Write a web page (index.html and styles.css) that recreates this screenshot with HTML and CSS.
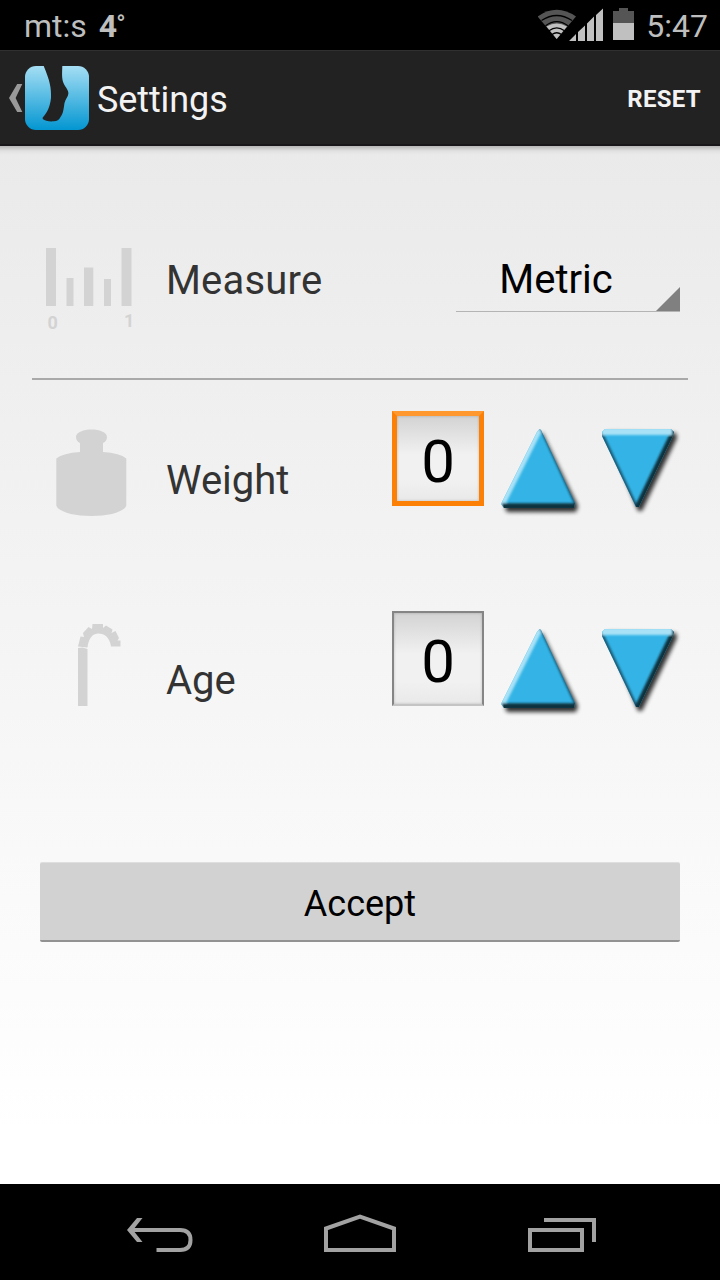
FILE: index.html
```html
<!DOCTYPE html>
<html lang="en">
<head>
<meta charset="utf-8">
<title>Settings</title>
<link rel="stylesheet" href="styles.css">
</head>
<body>
<svg class="defs" width="0" height="0" aria-hidden="true">
  <defs>
    <filter id="soft" x="-20%" y="-20%" width="140%" height="140%"><feGaussianBlur stdDeviation="2.2"/></filter>
    <filter id="edge" x="-10" y="-10" width="110" height="110" filterUnits="userSpaceOnUse"><feGaussianBlur stdDeviation="0.8"/></filter>
    <linearGradient id="sky" x1="0" y1="0" x2="0" y2="1"><stop offset="0" stop-color="#a5def4"/><stop offset="1" stop-color="#0396d1"/></linearGradient>
    <clipPath id="upClip"><path d="M39.500 4 41 5 75 78 74 83 4 83 1 79 37 7Z"/></clipPath>
    <clipPath id="downClip"><path d="M5 4 71 4 74 7 73 11 39 82 36 82 2 11 2 7Z"/></clipPath>
    <symbol id="up" viewBox="0 0 90 100">
      <path d="M42 7 78 81 76 87 7 87 5 83Z" fill="#000" opacity=".8" filter="url(#soft)"/>
      <g clip-path="url(#upClip)">
        <path d="M0 0H90V100H0Z" fill="#34b4e6"/>
        <g filter="url(#edge)">
          <path d="M39 3-1 83" stroke="#a9e2f7" stroke-width="8"/>
          <path d="M41 2 78 83" stroke="#1b5a74" stroke-width="4"/>
          <path d="M2 81.500H78" stroke="#0e303e" stroke-width="6.500"/>
        </g>
      </g>
    </symbol>
    <symbol id="down" viewBox="0 0 90 100">
      <path d="M7 7 76 8 77 13 42 86 38 86Z" fill="#000" opacity=".8" filter="url(#soft)"/>
      <g clip-path="url(#downClip)">
        <path d="M0 0H90V100H0Z" fill="#34b4e6"/>
        <g filter="url(#edge)">
          <path d="M1 8 37 84" stroke="#1b5a74" stroke-width="4"/>
          <path d="M76 5 38 84" stroke="#0e303e" stroke-width="8"/>
          <path d="M2 6.500H72" stroke="#a9e2f7" stroke-width="7"/>
        </g>
      </g>
    </symbol>
  </defs>
</svg>
<div class="screen">
  <header class="status">
    <span class="carrier">mt:s</span><b class="temp">4<span class="degree">°</span></b>
    <svg class="signals" width="100" height="40" viewBox="538 6 100 40">
      <path d="M537.500 16.500Q556.700 3 576 16.500L556.700 39Z" fill="#555"/>
      <path d="M546.500 26.500Q556.700 20.500 567 26.500L556.700 39Z" fill="#c0c0c0"/>
      <path d="M541.500 20.500Q556.700 10.500 572 20.500M545.500 25.700Q556.700 17.500 568 25.700M549 30.800Q556.700 25 564.500 30.800M552 34.500Q556.700 31 561.500 34.500" fill="none" stroke="#000" stroke-width="1.300"/>
      <path d="M569 41 576 34V41ZM578 41V32L585 25.500V41ZM587 41V23.500L594 16.500V41ZM596 41V15L603 8.500V41Z" fill="#c0c0c0"/>
      <path d="M613 11H619V8H628V11H634V23H613Z" fill="#555"/><path d="M613 23H634V40H613Z" fill="#c0c0c0"/>
    </svg>
    <span class="clock">5:47</span>
  </header>
  <nav class="actionbar">
    <svg class="brand" width="81" height="64" viewBox="8 66 81 64">
      <path d="M17.200 84H22.300L15.600 98 22.300 112H17.200L9 98Z" fill="#999"/>
      <rect x="25" y="66" width="64" height="64" rx="11" fill="url(#sky)"/>
      <path d="M43.700 66H62.300C62 76 61.500 80 65 86C67 89 68.500 91 68.400 93.500C68 97 65.500 99 64.500 103C63.500 109 63.500 113 60.500 117C59 120 57 121.300 54 121.300C49 121.700 45 121 42.700 119V117.500C47 113 50 107 51 98C51.400 88 50 81 43.700 66Z" fill="#222"/>
    </svg>
    <h1 class="title">Settings</h1>
    <span class="reset">RESET</span>
  </nav>
  <main class="content">
    <section class="row row-measure">
      <svg class="icon" width="110" height="110" viewBox="32 230 110 110" fill="#d3d3d3">
        <path d="M46 248H56V306H46ZM66.500 278H73.500V306H66.500ZM84 267.500H93.300V306H84ZM104 279H111V306H104ZM121.500 248H131.500V306H121.500Z"/>
        <text class="tick" x="47.400" y="329">0</text><text class="tick" x="124" y="326.500">1</text>
      </svg>
      <span class="label label-measure">Measure</span>
      <div class="spinner"><span class="spinner-text">Metric</span><svg class="corner" width="24" height="24"><path d="M24 0V24H0Z" fill="#808080"/></svg></div>
    </section>
    <section class="row">
      <svg class="icon" width="110" height="110" viewBox="32 425 110 110" fill="#d3d3d3">
        <path d="M80 452V443Q76 441 76 437C76 432 84 429.500 91.500 429.500S107 432 107 437Q107 441 103 443V452Q120 453 126.300 458.500V505.500C124 512 109 516 91.500 516S58.500 512 56.300 505.500V458.500Q63 453 80 452Z"/>
      </svg>
      <span class="label">Weight</span>
      <div class="field field-focus">0</div>
      <svg class="arrow" width="90" height="100"><use href="#up"/></svg>
      <svg class="arrow arrow-down" width="90" height="100"><use href="#down"/></svg>
    </section>
    <section class="row">
      <svg class="icon" width="110" height="110" viewBox="32 625 110 110" overflow="visible" fill="#d3d3d3">
        <path d="M78 648 82.500 647.500 87.500 649V706H78Z"/>
        <path d="M78 646.500 80.500 636.500 84 637 83 633 88.500 627 92 629 92.500 624H103L103 628 106 625.500 112.500 629.500 111.500 633 115.500 631 119 638 117.500 640.500 120.500 640.500V646.500H111C110 638 105 633.500 98 633.500C91 634 88.500 640 87.500 647.500Z"/>
      </svg>
      <span class="label">Age</span>
      <div class="field">0</div>
      <svg class="arrow" width="90" height="100"><use href="#up"/></svg>
      <svg class="arrow arrow-down" width="90" height="100"><use href="#down"/></svg>
    </section>
    <button class="accept">Accept</button>
  </main>
  <footer class="navbar">
    <svg width="720" height="96" viewBox="0 1184 720 96" fill="none" stroke="#a2a2a2" stroke-width="4">
      <path d="M130 1230H180Q190.500 1230 190.500 1240T180 1250H156.500"/>
      <path d="M137 1218H142.500L133 1230 142.500 1242H137L127 1230Z" fill="#a2a2a2" stroke="none"/>
      <path d="M326 1250V1228.500L360 1216.500 394 1228.500V1250Z"/>
      <path d="M530 1230H582V1250H530ZM544 1220H594V1242"/>
    </svg>
  </footer>
</div>
</body>
</html>
```
FILE: styles.css
```css
* { box-sizing: border-box; }
body { margin: 0; background: #000; font-family: Roboto, sans-serif; }
.defs { display: block; height: 0; }
.screen { width: 720px; height: 1280px; display: flex; flex-direction: column; }
.status { height: 50px; display: flex; padding: 2px 12px 0 24px; background: #000; color: #bebebe; font-size: 32px; line-height: 48px; }
.temp { margin-left: 12px; letter-spacing: -1px; }
.degree { font-size: 24px; line-height: 1; vertical-align: 5px; }
.signals { margin: 4px 8px 0 auto; }
.actionbar { height: 96px; display: flex; align-items: center; padding: 0 19px 0 8px; background: #222; border-top: 1px solid #303030; border-bottom: 2px solid #191719; color: #f3f3f3; }
.title { margin: 4px 0 0 8px; font-size: 36px; font-weight: 400; line-height: 48px; letter-spacing: -0.1px; }
.reset { margin: 2px 0 0 auto; font-size: 24px; font-weight: 700; letter-spacing: 0.3px; }
.content { height: 1038px; padding: 34px 32px 0; background: linear-gradient(rgba(0,0,0,.22), rgba(0,0,0,0.04) 5px, transparent 9px) top / 100% 10px no-repeat, linear-gradient(#eaeaea, #fff 95%); }
.row { height: 200px; display: flex; align-items: center; }
.row-measure { border-bottom: 2px solid #a9a9a9; }
.icon { flex: none; }
.row-measure .icon { margin-top: 12px; }
.tick { font: 700 18px Roboto, sans-serif; }
.label { flex: none; width: 259px; margin-top: 2px; padding-left: 24px; font-size: 40px; line-height: 48px; color: #333; }
.label-measure { width: 314px; margin-top: 4px; letter-spacing: 0.2px; }
.spinner { flex: none; position: relative; width: 224px; height: 64px; margin-top: 2px; border-bottom: 1px solid #b4b4b4; text-align: center; }
.spinner-text { display: block; padding-right: 24px; font-size: 40px; line-height: 64px; color: #000; }
.corner { position: absolute; right: 0; bottom: 0; }
.field { flex: none; width: 92px; height: 95px; margin: -43px 0 0 -9px; border: 2px solid #858585; border-bottom-color: #c4c4c4; background: linear-gradient(#d3d3d3, #f1f1f1 45%, #f1f1f1 75%, #e9e9e9); box-shadow: inset 0 0 3px rgba(0,0,0,.2); text-align: center; font-size: 60px; line-height: 98px; color: #000; }
.field-focus { border: 5px solid #fb8005; border-top-color: #ff982e; line-height: 92px; }
.arrow { flex: none; margin: -10px 0 0 16px; }
.arrow-down { margin-left: 10px; }
.accept { display: block; width: 640px; height: 80px; margin: 82px 0 0 8px; padding: 5px 0 0; border: 0; border-top: 1px solid #dfdfdf; border-bottom: 2px solid #929292; border-radius: 2px; background: #d2d2d2; font: 400 36px Roboto, sans-serif; color: #000; }
.navbar { height: 96px; background: #000; }
.navbar svg { display: block; }
```
